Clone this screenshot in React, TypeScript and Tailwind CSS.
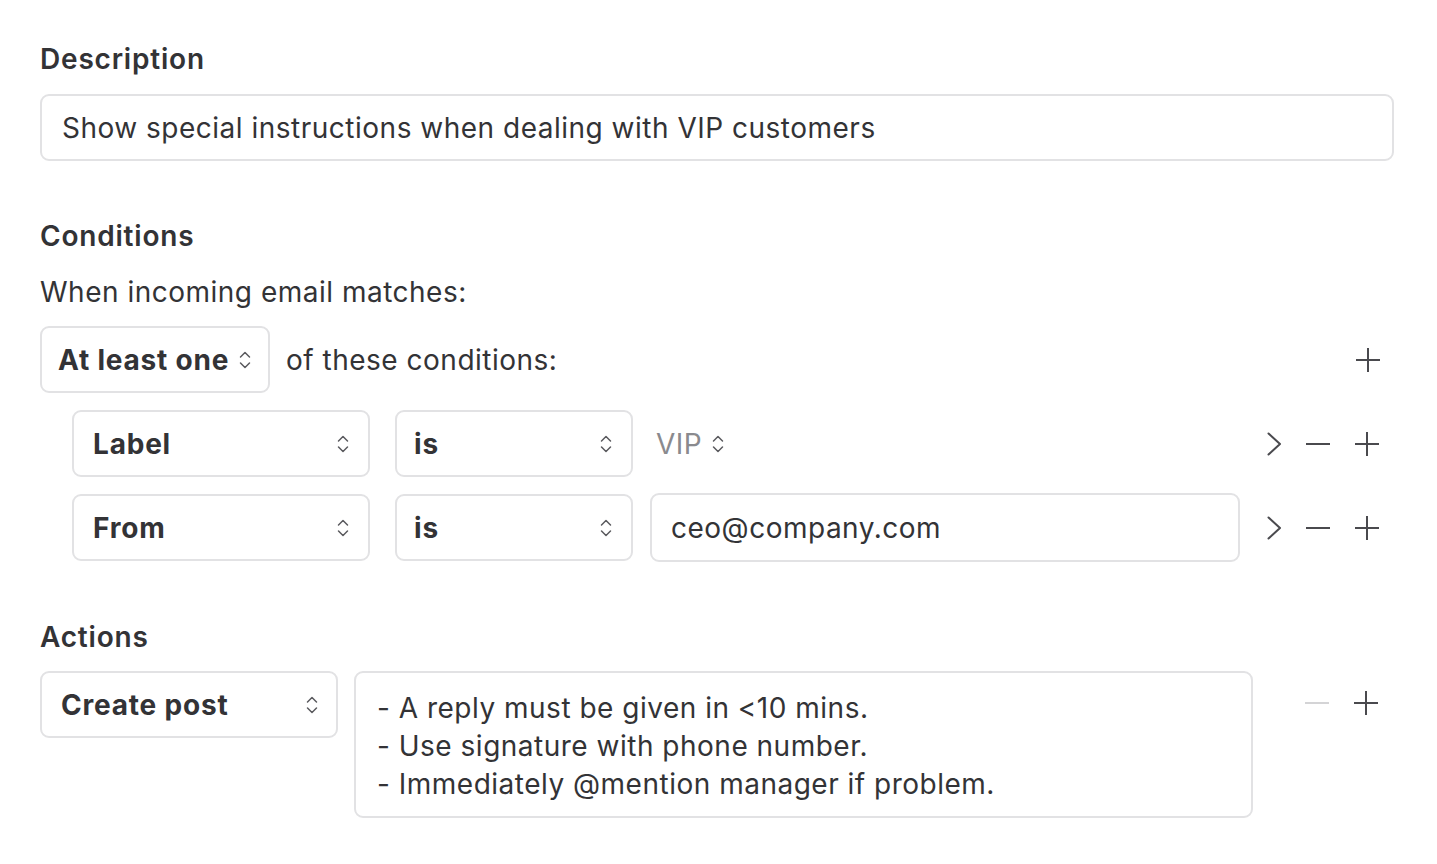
import React from "react";

const font = { fontFamily: "Inter, 'Noto Sans', sans-serif" };

function UpDown({ className = "" }: { className?: string }) {
  return (
    <svg width="12" height="22" viewBox="0 0 12 22" fill="none" className={className}>
      <path d="M1.5 8 L6 3.5 L10.5 8" stroke="#5a5a5e" strokeWidth="1.5" strokeLinecap="round" strokeLinejoin="round" />
      <path d="M1.5 14 L6 18.5 L10.5 14" stroke="#5a5a5e" strokeWidth="1.5" strokeLinecap="round" strokeLinejoin="round" />
    </svg>
  );
}

function Chevron() {
  return (
    <svg width="16" height="26" viewBox="0 0 16 26" fill="none">
      <path d="M2.5 2.5 L14 13 L2.5 23.5" stroke="#4a4a4e" strokeWidth="2" strokeLinecap="round" strokeLinejoin="round" />
    </svg>
  );
}

function Minus({ light = false }: { light?: boolean }) {
  return (
    <svg width="26" height="26" viewBox="0 0 26 26" fill="none">
      <path d="M1 13 H25" stroke={light ? "#d4d4d6" : "#4a4a4e"} strokeWidth="2" />
    </svg>
  );
}

function Plus() {
  return (
    <svg width="26" height="26" viewBox="0 0 26 26" fill="none">
      <path d="M1 13 H25 M13 1 V25" stroke="#4a4a4e" strokeWidth="2" />
    </svg>
  );
}

function Select({ label, w, pl, chevronRight }: { label: string; w: string; pl: string; chevronRight: string }) {
  return (
    <div className={`${w} h-[67px] shrink-0 rounded-[9px] border-2 border-[#e2e2e4] bg-white flex items-center justify-between ${pl} ${chevronRight}`}>
      <span className="text-[28px] font-bold tracking-[0.8px] text-[#333336]">{label}</span>
      <UpDown />
    </div>
  );
}

export default function App() {
  return (
    <div className="w-[1437px] h-[864px] bg-white text-[#333336] overflow-hidden tracking-[0.5px]" style={font}>
      <div className="pl-[40px] pr-[43px] pt-[40px]">
        <div className="text-[28px] font-semibold leading-[38px] tracking-[0.8px]">Description</div>
        <div className="mt-[16px] h-[67px] rounded-[9px] border-2 border-[#e2e2e4] flex items-center pl-[20px] text-[28px]">
          Show special instructions when dealing with VIP customers
        </div>

        <div className="mt-[56px] text-[28px] font-semibold leading-[38px] tracking-[0.8px]">Conditions</div>
        <div className="mt-[18px] text-[28px] leading-[38px]">When incoming email matches:</div>

        <div className="mt-[15px] flex items-center">
          <div className="w-[230px] h-[67px] shrink-0 rounded-[9px] border-2 border-[#e2e2e4] flex items-center pl-[16px] gap-[10px]">
            <span className="text-[28px] font-bold tracking-[0.8px]">At least one</span>
            <UpDown />
          </div>
          <span className="ml-[16px] text-[28px] flex-1">of these conditions:</span>
          <div className="w-[54px] flex justify-start pl-[15px]">
            <Plus />
          </div>
        </div>

        <div className="mt-[17px] pl-[32px] flex items-center">
          <Select label="Label" w="w-[298px]" pl="pl-[19px]" chevronRight="pr-[19px]" />
          <div className="w-[25px]" />
          <Select label="is" w="w-[238px]" pl="pl-[17px]" chevronRight="pr-[19px]" />
          <div className="ml-[17px] flex-1 flex items-center gap-[10px]">
            <span className="text-[28px] text-[#8a8a8e] ml-[6px]">VIP</span>
            <UpDown />
          </div>
          <div className="ml-[12px] w-[142px] flex items-center">
            <div className="w-[44px] flex justify-center"><Chevron /></div>
            <div className="w-[44px] flex justify-center"><Minus /></div>
            <div className="w-[54px] flex justify-center"><Plus /></div>
          </div>
        </div>

        <div className="mt-[16px] pl-[32px] flex items-center">
          <Select label="From" w="w-[298px]" pl="pl-[19px]" chevronRight="pr-[19px]" />
          <div className="w-[25px]" />
          <Select label="is" w="w-[238px]" pl="pl-[17px]" chevronRight="pr-[19px]" />
          <div className="ml-[17px] flex-1 h-[69px] rounded-[9px] border-2 border-[#e2e2e4] flex items-center pl-[19px] text-[28px]">
            ceo@company.com
          </div>
          <div className="ml-[12px] w-[142px] flex items-center">
            <div className="w-[44px] flex justify-center"><Chevron /></div>
            <div className="w-[44px] flex justify-center"><Minus /></div>
            <div className="w-[54px] flex justify-center"><Plus /></div>
          </div>
        </div>

        <div className="mt-[56px] text-[28px] font-semibold leading-[38px] tracking-[0.8px]">Actions</div>
        <div className="mt-[15px] flex items-start">
          <Select label="Create post" w="w-[298px]" pl="pl-[19px]" chevronRight="pr-[18px]" />
          <div className="ml-[16px] flex-1 h-[147px] rounded-[9px] border-2 border-[#e2e2e4] pl-[21px] pt-[16px] text-[28px] leading-[38px]">
            <div>- A reply must be given in &lt;10 mins.</div>
            <div>- Use signature with phone number.</div>
            <div>- Immediately @mention manager if problem.</div>
          </div>
          <div className="ml-[42px] w-[99px] flex items-center pt-[19px]">
            <div className="w-[44px] flex justify-center"><Minus light /></div>
            <div className="w-[54px] flex justify-center"><Plus /></div>
          </div>
        </div>
      </div>
    </div>
  );
}
